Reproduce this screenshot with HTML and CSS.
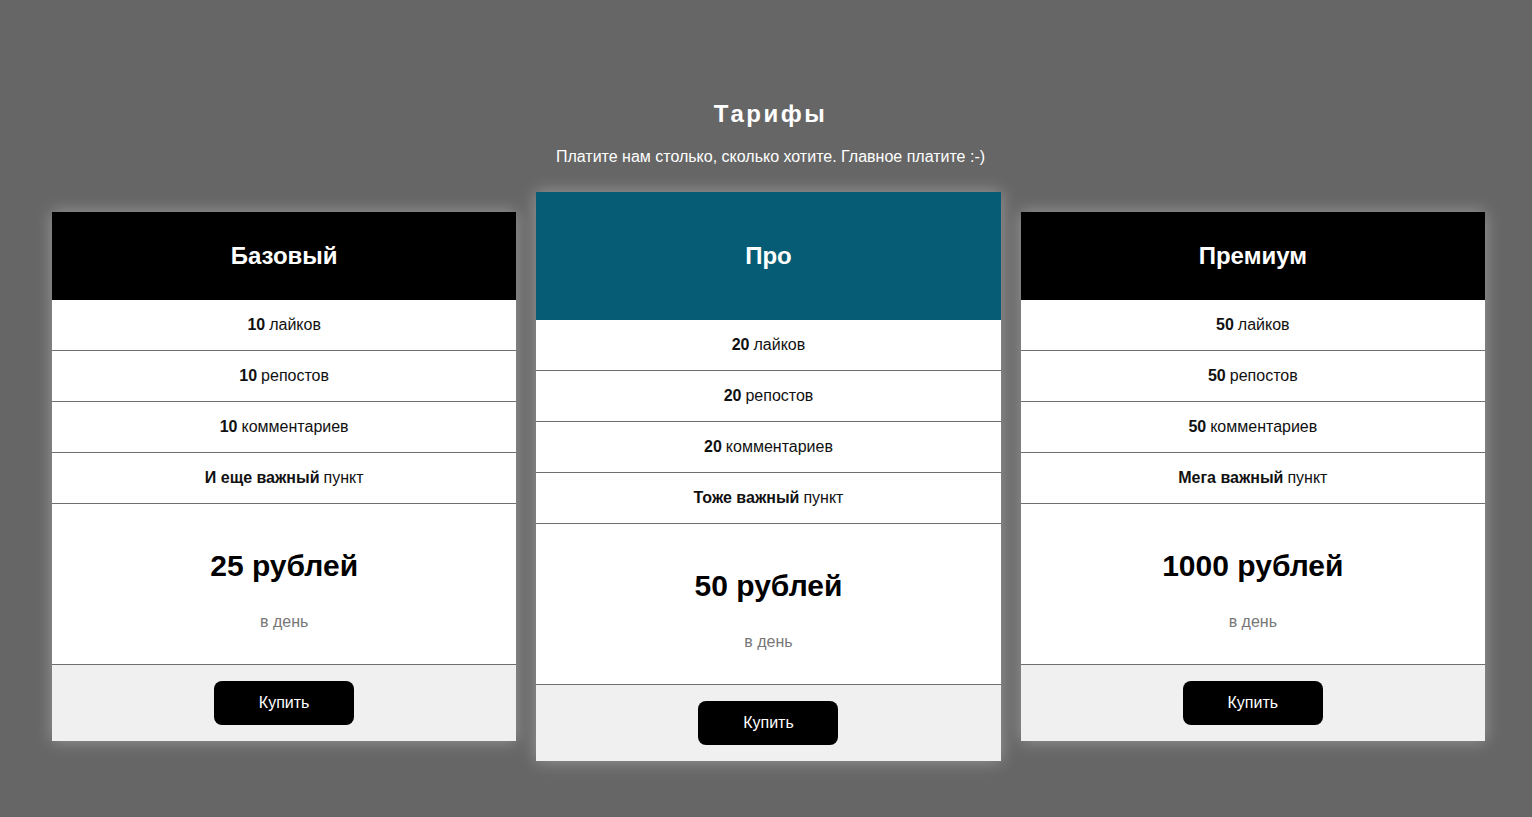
FILE: index.html
```html
<!DOCTYPE html>
<html lang="ru">
<head>
<meta charset="utf-8">
<title>Тарифы</title>
<link rel="stylesheet" href="styles.css">
</head>
<body>
<div class="page">
  <h1 class="title">Тарифы</h1>
  <p class="subtitle">Платите нам столько, сколько хотите. Главное платите :-)</p>
  <div class="plans">
    <div class="card">
      <div class="card-head">Базовый</div>
      <div class="row"><b>10</b> лайков</div>
      <div class="row"><b>10</b> репостов</div>
      <div class="row"><b>10</b> комментариев</div>
      <div class="row"><b>И еще важный</b> пункт</div>
      <div class="price-box">
        <div class="price">25 рублей</div>
        <div class="period">в день</div>
      </div>
      <div class="card-foot"><button class="buy">Купить</button></div>
    </div>
    <div class="card card-pro">
      <div class="card-head">Про</div>
      <div class="row"><b>20</b> лайков</div>
      <div class="row"><b>20</b> репостов</div>
      <div class="row"><b>20</b> комментариев</div>
      <div class="row"><b>Тоже важный</b> пункт</div>
      <div class="price-box">
        <div class="price">50 рублей</div>
        <div class="period">в день</div>
      </div>
      <div class="card-foot"><button class="buy">Купить</button></div>
    </div>
    <div class="card">
      <div class="card-head">Премиум</div>
      <div class="row"><b>50</b> лайков</div>
      <div class="row"><b>50</b> репостов</div>
      <div class="row"><b>50</b> комментариев</div>
      <div class="row"><b>Мега важный</b> пункт</div>
      <div class="price-box">
        <div class="price">1000 рублей</div>
        <div class="period">в день</div>
      </div>
      <div class="card-foot"><button class="buy">Купить</button></div>
    </div>
  </div>
</div>
</body>
</html>
```

FILE: styles.css
```css
* { box-sizing: border-box; }
html, body {
  margin: 0;
  padding: 0;
  background: #666666;
  font-family: "Liberation Sans", Arial, sans-serif;
}
.page {
  height: 817px;
  padding: 99px 47px 0 52px;
}
.title {
  margin: 0;
  text-align: center;
  color: #ffffff;
  font-size: 24px;
  font-weight: bold;
  letter-spacing: 2.5px;
  line-height: 30px;
  padding-left: 4px;
}
.subtitle {
  margin: 19px 0 0;
  text-align: center;
  color: #ffffff;
  font-size: 16px;
  line-height: 18px;
  padding-left: 4px;
}
.plans {
  display: flex;
  align-items: center;
  gap: 20px;
  margin-top: 26px;
}
.card {
  flex: 1;
  display: flex;
  flex-direction: column;
  background: #ffffff;
  box-shadow: 0 0 16px rgba(255, 255, 255, 0.35);
}
.card-head {
  height: 88px;
  display: flex;
  align-items: center;
  justify-content: center;
  background: #000000;
  color: #ffffff;
  font-size: 24px;
  font-weight: bold;
}
.card-pro .card-head {
  height: 128px;
  background: #055c74;
}
.row {
  height: 51px;
  display: flex;
  align-items: center;
  justify-content: center;
  border-bottom: 1px solid #6e6e6e;
  font-size: 16px;
  color: #111111;
}
.row b { margin-right: 4px; }
.price-box {
  height: 161px;
  display: flex;
  flex-direction: column;
  align-items: center;
  padding-top: 44px;
  border-bottom: 1px solid #6e6e6e;
}
.price {
  font-size: 30px;
  font-weight: bold;
  line-height: 36px;
  color: #000000;
}
.period {
  margin-top: 29px;
  font-size: 16px;
  line-height: 18px;
  color: #777777;
}
.card-foot {
  height: 76px;
  display: flex;
  justify-content: center;
  padding-top: 16px;
  background: #f0f0f0;
}
.buy {
  width: 140px;
  height: 44px;
  border: none;
  border-radius: 8px;
  background: #000000;
  color: #ffffff;
  font-family: "Liberation Sans", Arial, sans-serif;
  font-size: 16px;
  cursor: pointer;
}
```
